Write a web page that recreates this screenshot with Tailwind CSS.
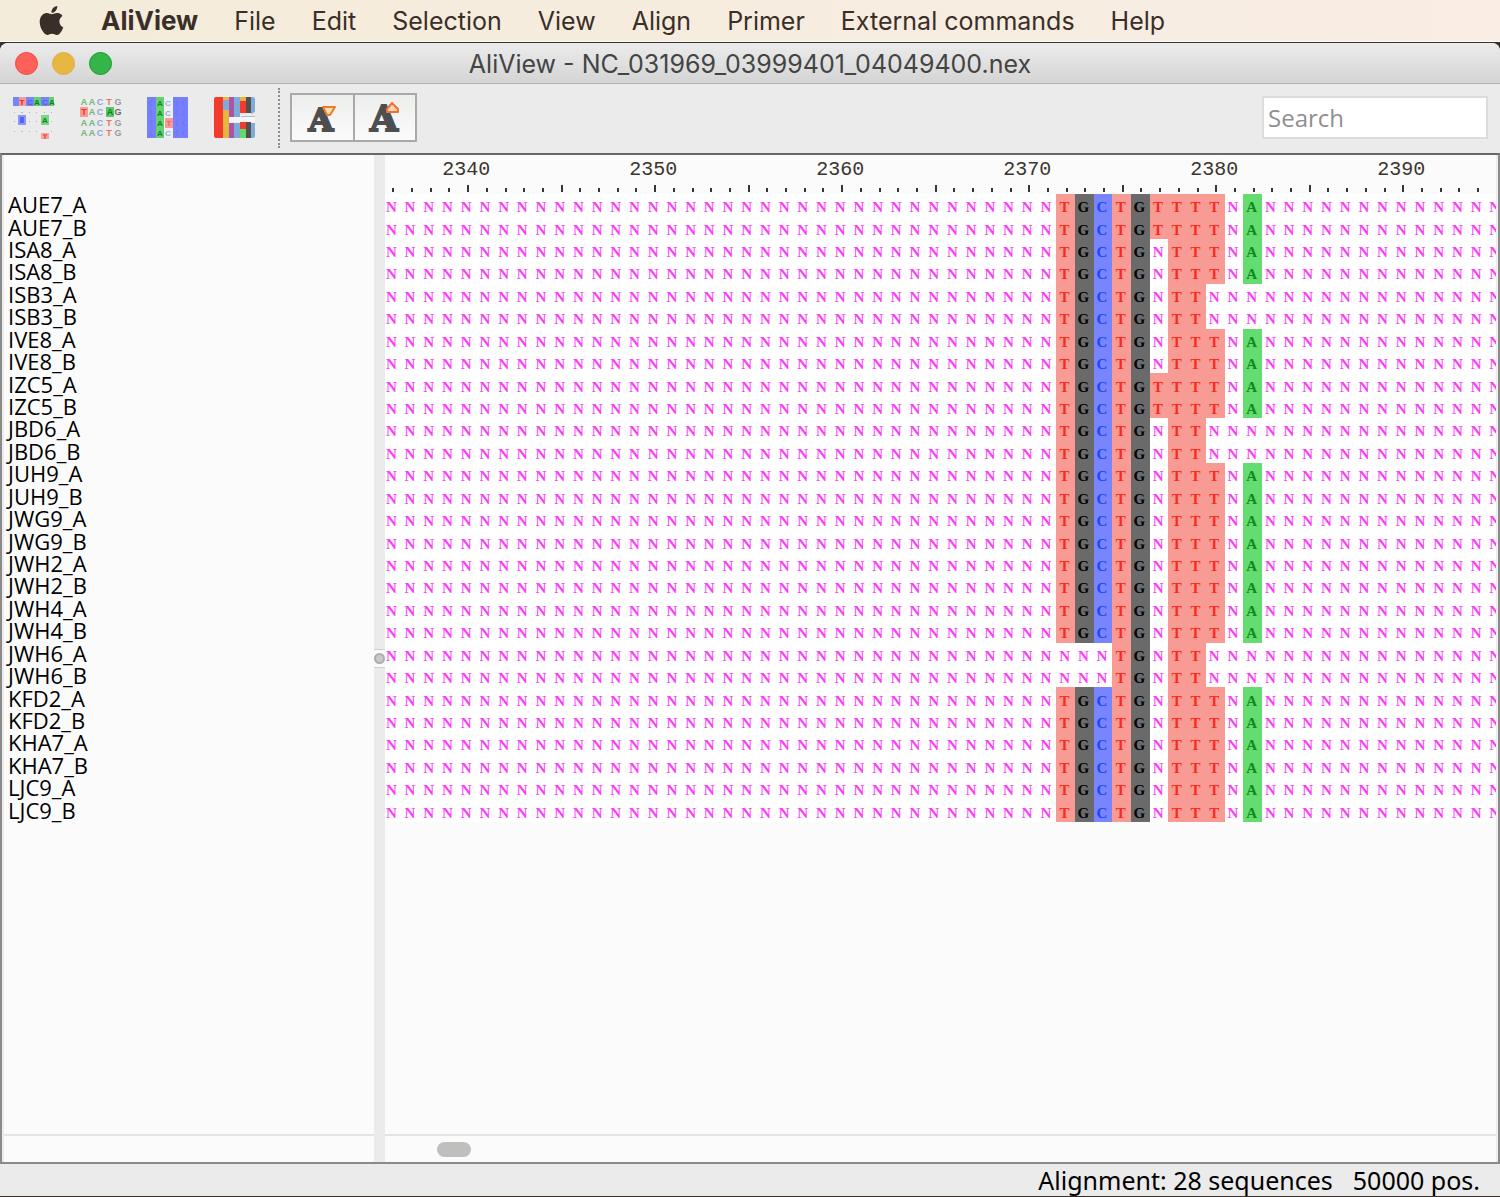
<!DOCTYPE html>
<html lang="en">
<head>
<meta charset="utf-8">
<meta name="viewport" content="width=device-width, initial-scale=1">
<title>AliView - NC_031969_03999401_04049400.nex</title>
<script src="https://cdn.jsdelivr.net/npm/@tailwindcss/browser@4"></script>
</head>
<body class="flex min-h-screen flex-col overflow-x-hidden bg-[#3a302d] pb-px font-['Open_Sans',sans-serif] text-black">

<!-- System menu bar -->
<nav class="flex h-[42px] items-center gap-9 border-b border-white bg-[#f6ecdc] bg-linear-to-r from-[#f4ecda] to-[#f9ede4] pl-[37px] font-['Inter',sans-serif] text-[25px] leading-[30px] whitespace-nowrap text-[#3a2f28]" aria-label="Menu bar">
  <button aria-label="Apple menu" class="-mr-px"><svg class="size-[29px]" viewBox="0 0 24 24" fill="currentColor" aria-hidden="true"><path d="M12.152 6.896c-.948 0-2.415-1.078-3.96-1.04-2.04.027-3.91 1.183-4.961 3.014-2.117 3.675-.546 9.103 1.519 12.09 1.013 1.454 2.208 3.09 3.792 3.039 1.52-.065 2.09-.987 3.935-.987 1.831 0 2.35.987 3.96.948 1.637-.026 2.676-1.48 3.676-2.948 1.156-1.688 1.636-3.325 1.662-3.415-.039-.013-3.182-1.221-3.22-4.857-.026-3.04 2.48-4.494 2.597-4.559-1.429-2.09-3.623-2.324-4.39-2.376-2-.156-3.675 1.09-4.61 1.09zM15.53 3.83c.843-1.012 1.4-2.427 1.245-3.83-1.207.052-2.662.805-3.532 1.818-.78.896-1.454 2.338-1.273 3.714 1.338.104 2.715-.688 3.559-1.701"/></svg></button>
  <button class="text-[26px] font-bold">AliView</button>
  <button>File</button>
  <button>Edit</button>
  <button>Selection</button>
  <button>View</button>
  <button>Align</button>
  <button>Primer</button>
  <button>External commands</button>
  <button>Help</button>
</nav>

<div class="mt-px flex flex-1 flex-col overflow-hidden rounded-t-lg bg-[#ebebeb]">

  <!-- Title bar -->
  <header class="grid h-[41px] shrink-0 grid-cols-[1fr_auto_1fr] items-center border-b border-[#b1b1b1] bg-linear-to-b from-[#ececec] to-[#d4d4d4] px-[15px]">
    <div class="flex gap-[14px]">
      <button aria-label="Close" class="size-[23px] rounded-full border border-[#f04a44] bg-[#ff6059]"></button>
      <button aria-label="Minimize" class="size-[23px] rounded-full border border-[#e0b040] bg-[#e6b741]"></button>
      <button aria-label="Zoom" class="size-[23px] rounded-full border border-[#159d2b] bg-[#35b548]"></button>
    </div>
    <h1 class="pt-0.5 font-['Inter',sans-serif] text-[25px] leading-[30px] whitespace-nowrap text-[#444]">AliView - NC_031969_03999401_04049400.nex</h1>
  </header>

  <!-- Toolbar -->
  <div class="flex h-[69px] shrink-0 items-center pr-3 pb-0.5 pl-[13px]" role="toolbar" aria-label="Alignment view">
    <div class="flex gap-[25px]">
      <button aria-label="Show differences only">
        <svg class="h-[44px] w-[42px]" viewBox="0 0 42 44" aria-hidden="true" font-family="Liberation Sans" font-weight="bold" font-size="8" text-anchor="middle">
          <path fill="#7884fb" d="M0 1h6v9H0zM13 1h8v9h-8zM28 1h8v9h-8z"/><path fill="#f99a94" d="M6 1h7v9H6z"/><path fill="#66d070" d="M21 1h7v9h-7zM36 1h5v9h-5z"/>
          <g fill="#5060e4"><text x="17" y="9">C</text><text x="32" y="9">C</text></g><text x="9" y="9" fill="#e02a20">T</text><g fill="#118022"><text x="24" y="9">A</text><text x="39" y="9">A</text></g>
          <path fill="#9fb6dc" d="M1 16h1v1H1zM16 16h1v1h-1zM31 16h1v1h-1zM1 35h1v1H1zM16 35h1v1h-1zM16 25h1v1h-1zM1 25h1v1H1z"/><path fill="#ef9f98" d="M8 16h2v1H8zM8 35h2v1H8z"/><path fill="#95c79b" d="M23 16h1v1h-1zM38 16h1v1h-1zM23 25h1v1h-1zM38 25h1v1h-1zM23 35h1v1h-1zM38 35h1v1h-1z"/>
          <path fill="#8a96fb" d="M5 19h8v10H5z"/><path fill="#5463f0" d="M7 21h4v6H7z"/><path fill="#7bd684" d="M28 19h8v10h-8z"/><text x="32" y="27" fill="#118022">A</text><path fill="#f9a39d" d="M28 37h8v6h-8z"/><path fill="#f5655c" d="M30 38h4v2h-1v3h-2v-3h-1z"/>
        </svg>
      </button>
      <button aria-label="Highlight differences">
        <svg class="h-[44px] w-[42px]" viewBox="0 0 42 44" aria-hidden="true" font-family="Liberation Sans" font-weight="bold" font-size="9" text-anchor="middle">
          <path fill="#f99a94" d="M0 11h8v10H0z"/><path fill="#55c962" d="M26 11h8v10h-8z"/>
          <g fill="#6cb878"><text x="4" y="9">A</text><text x="12" y="9">A</text><text x="12" y="19">A</text><text x="4" y="30">A</text><text x="12" y="30">A</text><text x="4" y="40">A</text><text x="12" y="40">A</text></g>
          <g fill="#8ea5dc"><text x="20" y="9">C</text><text x="20" y="19">C</text><text x="20" y="30">C</text><text x="20" y="40">C</text></g>
          <g fill="#ee7068"><text x="29" y="9">T</text><text x="29" y="30">T</text><text x="29" y="40">T</text><text x="4" y="19" fill="#e8382e">T</text></g>
          <g fill="#999"><text x="38" y="9">G</text><text x="38" y="19" fill="#666">G</text><text x="38" y="30">G</text><text x="38" y="40">G</text></g><text x="30" y="19" fill="#0f7f20">A</text>
        </svg>
      </button>
      <button aria-label="Highlight consensus">
        <svg class="h-[44px] w-[42px]" viewBox="0 0 42 44" aria-hidden="true" font-family="Liberation Sans" font-weight="bold" font-size="8" text-anchor="middle">
          <path fill="#7680fc" d="M0 1h9v41H0zM26 1h15v41H26z"/><path fill="#62d16e" d="M9 1h8v41H9z"/><path fill="#edf0f6" d="M17 1h9v41h-9z"/><path fill="#f99a94" d="M18 22h8v10h-8z"/>
          <path fill="none" stroke="#6a75f2" d="M5 4q-4 2 0 6M5 14q-4 2 0 6M5 24q-4 2 0 6M5 34q-4 2 0 6M31 4q-4 2 0 6M31 14q-4 2 0 6M31 24q-4 2 0 6M31 34q-4 2 0 6M38 4q-4 2 0 6M38 14q-4 2 0 6M38 24q-4 2 0 6M38 34q-4 2 0 6"/>
          <g fill="#128426"><text x="13" y="10">A</text><text x="13" y="20">A</text><text x="13" y="30">A</text><text x="13" y="40">A</text></g>
          <g fill="#9aaedc"><text x="21" y="10">C</text><text x="21" y="20">C</text><text x="21" y="40">C</text></g><text x="22" y="30" fill="#f5655c">T</text>
        </svg>
      </button>
      <button aria-label="Amino acid colours">
        <svg class="h-[44px] w-[42px]" viewBox="0 0 42 44" aria-hidden="true">
          <path fill="#f4392d" d="M2 1h7v41H2q-2 0-2-2V3q0-2 2-2z"/><path fill="#e6b63e" d="M9 1h6v3H9zM9 14h6v28H9zM26 1h6v4h-6z"/><path fill="#7fabd8" d="M9 4h6v10H9zM20 1h6v20h-6zM20 27h6v15h-6zM37 1h2q2 0 2 2v13l-4 2zM37 27h4v13q0 2-2 2h-2z"/><path fill="#ab55a5" d="M15 1h5v20h-5zM15 27h5v15h-5z"/><path fill="#f4392d" d="M26 5h6v12h-6zM26 26h6v7h-6z"/><path fill="#54504d" d="M32 1h5v16h-5zM32 26h5v16h-5z"/><path fill="#5fdc6c" d="M26 33h6v9h-6z"/><path fill="#f6f6f6" d="M15 21h26v5H15z"/><path fill="#bbb" d="M27 20h14v1H27z"/>
        </svg>
      </button>
    </div>
    <div class="ml-[22px] h-[60px] border-l-2 border-dotted border-[#8c8c8c]"></div>
    <div class="ml-[10px] flex">
      <button aria-label="Decrease font size" class="flex h-[49px] w-[65px] items-center justify-center border-2 border-[#a9a9a9] bg-linear-to-b from-[#eceeec] to-[#fbfbfb]">
        <svg class="h-[42px] w-[44px]" viewBox="0 0 44 42" aria-hidden="true"><text x="20" y="34" text-anchor="middle" font-family="DejaVu Serif" font-weight="bold" font-size="32" fill="#4d4e50" stroke="#4d4e50" stroke-width="2">A</text><path d="M22 10h12l-5 8h-3z" fill="#fde0b0" stroke="#ee7a2e" stroke-width="2" stroke-linejoin="round"/></svg>
      </button>
      <button aria-label="Increase font size" class="-ml-0.5 flex h-[49px] w-[64px] items-center justify-center border-2 border-[#a9a9a9] bg-linear-to-b from-[#eceeec] to-[#fbfbfb]">
        <svg class="h-[42px] w-[44px]" viewBox="0 0 44 42" aria-hidden="true"><text x="21" y="34" text-anchor="middle" font-family="DejaVu Serif" font-weight="bold" font-size="36" fill="#4d4e50" stroke="#4d4e50" stroke-width="2">A</text><path d="M24 15v-3l5-6 6 6v3z" fill="#fbd3ac" stroke="#f0703a" stroke-width="2" stroke-linejoin="round"/></svg>
      </button>
    </div>
    <label for="search" class="sr-only">Search</label>
    <input id="search" type="text" placeholder="Search" class="ml-auto h-[43px] w-[226px] border-2 border-[#dadddb] bg-white px-1 text-2xl leading-8 outline-none placeholder:text-[#8f8f8f]">
  </div>

  <!-- Split pane: sequence names | alignment -->
  <main class="flex flex-1 border-x-2 border-t-2 border-b-2 border-[#8a8a8a] border-t-[#686868]">
    <section class="flex w-[372px] shrink-0 flex-col border-l-2 border-[#ececec] bg-[#fbfbfb]" aria-label="Sequence names">
      <ul id="names" class="mt-[38px] grid h-[628px] auto-rows-fr items-center pl-1 text-[22px] leading-[22px] font-medium"></ul>
      <div class="mt-auto h-[28px] border-t-2 border-[#e3e5e3]"></div>
    </section>

    <div class="flex w-[11px] shrink-0 items-center bg-[#ebebeb]" role="separator" aria-orientation="vertical">
      <div class="flex h-[19px] w-full items-center border-y border-[#cfcfcf] bg-[#fafafa]"><span class="size-[11px] rounded-full border-2 border-[#adadad] bg-[#c9c9c9]"></span></div>
    </div>

    <section class="flex min-w-0 flex-1 flex-col border-r-2 border-[#ececec] bg-[#fbfbfb]" aria-label="Alignment">
      <div class="overflow-hidden">
        <div id="ruler" class="-ml-px grid h-[39px] w-[101%] auto-cols-fr grid-flow-col font-['Liberation_Mono',monospace] text-[20px] leading-[30px] text-[#3c352f]"></div>
        <table class="-ml-0.5 block w-[101%] bg-white font-['Liberation_Serif',serif] text-[15px] leading-[18px] font-bold">
          <tbody id="alignment" class="grid h-[628px] auto-rows-fr"></tbody>
        </table>
      </div>
      <div class="mt-auto flex h-[28px] items-center border-t-2 border-[#e3e5e3] pl-[52px]"><div class="h-[15px] w-[34px] rounded-full bg-[#bfbfbd]"></div></div>
    </section>
  </main>

  <footer class="flex h-[32px] shrink-0 items-center justify-end gap-5 pr-5 font-['Noto_Sans',sans-serif] text-[25px] leading-[32px] whitespace-nowrap">
    <span>Alignment: 28 sequences</span><span>50000 pos.</span>
  </footer>
</div>

<script>
const FIRST = 2336, COLUMNS = 60, VARIABLE_START = 36;
const usual = 'TGCTGNTTTNA';
const variants = { AUE7: 'TGCTGTTTTNA', IZC5: 'TGCTGTTTTNA', ISB3: 'TGCTGNTTNNN', JBD6: 'TGCTGNTTNNN', JWH6: 'NNNTGNTTNNN' };
const samples = ['AUE7','ISA8','ISB3','IVE8','IZC5','JBD6','JUH9','JWG9','JWH2','JWH4','JWH6','KFD2','KHA7','LJC9'];
const tint = {
  N: 'text-[#fb3cfb]',
  T: 'bg-[#f99b95] text-[#fb2a1e]',
  G: 'bg-[#6a6a6a] text-black',
  C: 'bg-[#7985ff] text-[#2146f2]',
  A: 'bg-[#64dc70] text-[#0c8a1c]'
};

let ruler = '';
for (let i = 0; i < COLUMNS; i++) {
  const pos = FIRST + i;
  const label = pos % 10 === 0 ? '<span class="-ml-1 whitespace-nowrap">' + pos + '</span>' : '';
  const tick = pos % 5 === 0 ? 'mt-auto mb-0.5 h-[7px] w-0.5 shrink-0 bg-[#3c352f]' : 'mt-auto mb-0.5 h-1 w-0.5 shrink-0 bg-[#3c352f]';
  ruler += '<div class="flex min-w-0 flex-col items-center">' + label + '<i class="' + tick + '"></i></div>';
}
document.getElementById('ruler').innerHTML = ruler;

let names = '', rows = '';
for (const s of samples) for (const allele of ['A', 'B']) {
  names += '<li>' + s + '_' + allele + '</li>';
  const seq = ('N'.repeat(VARIABLE_START) + (variants[s] || usual)).padEnd(COLUMNS, 'N');
  rows += '<tr class="grid auto-cols-fr grid-flow-col">' +
    [...seq].map(b => '<td class="flex min-w-0 items-center justify-center pt-1 pr-0.5 ' + tint[b] + '">' + b + '</td>').join('') + '</tr>';
}
document.getElementById('names').innerHTML = names;
document.getElementById('alignment').innerHTML = rows;
</script>
</body>
</html>
